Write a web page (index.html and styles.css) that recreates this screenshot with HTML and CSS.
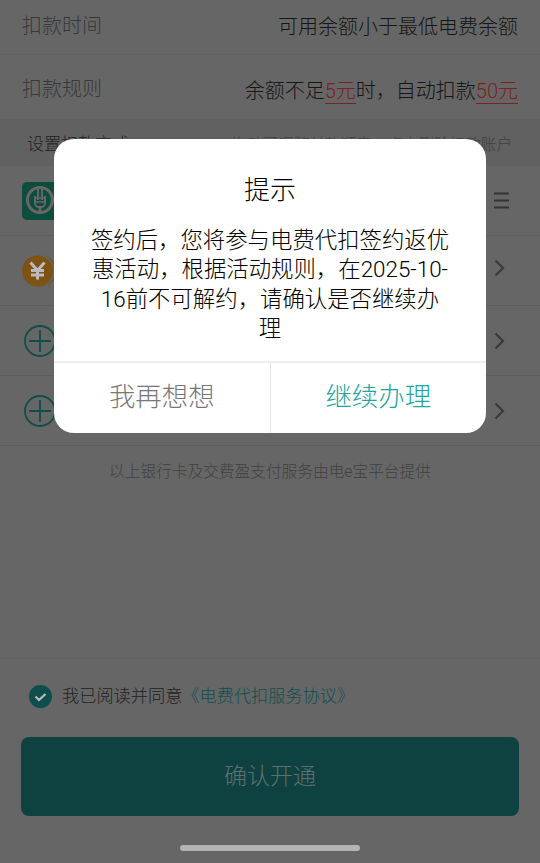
FILE: index.html
```html
<!DOCTYPE html>
<html lang="zh-CN">

<head>
    <meta charset="UTF-8">
    <meta name="viewport" content="width=device-width, initial-scale=1.0">
    <title>电费代扣</title>
    <link rel="stylesheet" href="styles.css">
</head>

<body>

    <div class="page">
        <div class="info-row info-time">
            <span class="info-label">扣款时间</span>
            <span class="info-value">可用余额小于最低电费余额</span>
        </div>
        <div class="info-row info-rule">
            <span class="info-label">扣款规则</span>
            <span class="info-value">余额不足<em>5元</em>时，自动扣款<em>50元</em></span>
        </div>

        <div class="pay-head">
            <span class="pay-title">设置扣款方式</span>
            <span class="pay-tip">拖动可调整付款顺序，点击删除扣款账户</span>
        </div>

        <div class="pay-row">
            <svg class="pay-icon" width="38" height="38" viewBox="0 0 38 38">
                <rect width="38" height="38" rx="5" fill="#0c4d3d" />
                <circle cx="18" cy="18" r="12.500" fill="none" stroke="#666" stroke-width="3" />
                <path d="M13 14v8c0 2 3 3 5 3s5-1 5-3v-8" stroke="#666" stroke-width="2" fill="none" />
                <path d="M16 4v14M20 4v14" stroke="#666" stroke-width="2" fill="none" />
                <path d="M13 16h10M13 20h10" stroke="#666" stroke-width="1.500" fill="none" />
                <path d="M18 24v8" stroke="#666" stroke-width="3" fill="none" />
            </svg>
            <svg class="drag-icon" width="15" height="17" viewBox="0 0 15 17">
                <path d="M0 1.500h15M0 8.500h15M0 15.500h15" stroke="#333" stroke-width="2" />
            </svg>
        </div>
        <div class="pay-row">
            <svg class="pay-icon" width="38" height="32" viewBox="0 0 38 32">
                <circle cx="19" cy="16" r="15.500" fill="#7d5214" />
                <circle cx="17" cy="16" r="16" fill="#666" />
                <circle cx="15.500" cy="16" r="15.500" fill="#7d5214" />
                <path d="M8.500 7.500l7 8 7-8M15.500 15v9.500M9 15.500h13M9 20h13" stroke="#bbb" stroke-width="3" fill="none" />
            </svg>
            <svg class="arrow arrow-high" width="11" height="18" viewBox="0 0 11 18">
                <path d="M1.500 1.500l7.500 7.500-7.500 7.500" stroke="#3a3a3a" stroke-width="2.200" fill="none" />
            </svg>
        </div>
        <div class="pay-row">
            <svg class="pay-icon add-icon" width="32" height="32" viewBox="0 0 32 32">
                <circle cx="16" cy="16" r="15" fill="none" stroke="#0d4f4b" stroke-width="1.800" />
                <path d="M16 5v22M5 16h22" stroke="#0d4f4b" stroke-width="1.800" />
            </svg>
            <svg class="arrow" width="11" height="18" viewBox="0 0 11 18">
                <path d="M1.500 1.500l7.500 7.500-7.500 7.500" stroke="#3a3a3a" stroke-width="2.200" fill="none" />
            </svg>
        </div>
        <div class="pay-row">
            <svg class="pay-icon add-icon" width="32" height="32" viewBox="0 0 32 32">
                <circle cx="16" cy="16" r="15" fill="none" stroke="#0d4f4b" stroke-width="1.800" />
                <path d="M16 5v22M5 16h22" stroke="#0d4f4b" stroke-width="1.800" />
            </svg>
            <svg class="arrow" width="11" height="18" viewBox="0 0 11 18">
                <path d="M1.500 1.500l7.500 7.500-7.500 7.500" stroke="#3a3a3a" stroke-width="2.200" fill="none" />
            </svg>
        </div>

        <p class="pay-note">以上银行卡及交费盈支付服务由电e宝平台提供</p>

        <div class="bottom">
            <div class="agree">
                <svg width="23" height="23" viewBox="0 0 23 23">
                    <circle cx="11.500" cy="11.500" r="11.500" fill="#0e4f4d" />
                    <path d="M6.500 11.500l3.500 3.500 6.500-6" stroke="#bbb" stroke-width="2.200" fill="none" />
                </svg>
                <span>我已阅读并同意<a>《电费代扣服务协议》</a></span>
            </div>
            <div class="confirm-btn">确认开通</div>
        </div>
    </div>

    <div class="dialog-wrap">
        <div class="dialog">
            <h2>提示</h2>
            <p>签约后，您将参与电费代扣签约返优惠活动，根据活动规则，在2025-10-16前不可解约，请确认是否继续办理</p>
            <div class="dialog-btns">
                <div class="btn-cancel">我再想想</div>
                <div class="btn-ok">继续办理</div>
            </div>
        </div>
    </div>

    <div class="home-bar"></div>

</body>

</html>
```

FILE: styles.css
```css
* {
    box-sizing: border-box;
}

body {
    margin: 0;
    font-family: Roboto, "Noto Sans CJK SC", sans-serif;
    font-weight: 300;
    overflow: hidden;
}

.page {
    position: relative;
    height: 863px;
    background-color: #666;
    color: #333;
    display: flex;
    flex-direction: column;
}

.info-row {
    display: flex;
    justify-content: space-between;
    align-items: center;
    padding: 0 22px;
    font-size: 20px;
    border-bottom: 1px solid #626262;
}

.info-time {
    height: 55px;
    padding-bottom: 3px;
}

.info-rule {
    height: 64px;
    padding-top: 4px;
    border-bottom: none;
}

.info-label {
    color: #383838;
    padding-bottom: 3px;
}

.info-value {
    color: #151515;
}

.info-value em {
    font-style: normal;
    color: #7d2020;
    border-bottom: 1px solid #7d2020;
}

.pay-head {
    height: 47px;
    display: flex;
    justify-content: space-between;
    align-items: center;
    padding: 0 28px 0 27px;
    background-color: #616161;
}

.pay-title {
    font-size: 17px;
    color: #222;
}

.pay-tip {
    font-size: 15.600px;
    color: #404040;
}

.pay-row {
    height: 70px;
    display: flex;
    justify-content: space-between;
    align-items: center;
    padding: 0 31px 0 22px;
    border-bottom: 1px solid #5d5d5d;
}

.add-icon {
    margin-left: 2px;
}

.arrow {
    margin-right: 4px;
}

.arrow-high {
    margin-bottom: 6px;
}

.pay-note {
    margin: 13px 0 0;
    text-align: center;
    font-size: 15.700px;
    color: #404040;
}

.bottom {
    margin-top: auto;
    height: 205px;
    padding: 0 21px;
    border-top: 1px solid #626262;
}

.agree {
    display: flex;
    align-items: center;
    gap: 10px;
    margin: 23px 0 0 8px;
    font-size: 17.200px;
    color: #1f1f1f;
}

.agree span {
    padding-bottom: 3px;
}

.agree a {
    color: #0e4f4d;
}

.confirm-btn {
    height: 79px;
    margin-top: 27px;
    padding-bottom: 6px;
    border-radius: 8px;
    background-color: #0d4240;
    color: #5f6f6e;
    font-size: 23px;
    display: flex;
    align-items: center;
    justify-content: center;
}

.dialog-wrap {
    position: absolute;
    top: 139px;
    left: 54px;
}

.dialog {
    width: 432px;
    height: 294px;
    background-color: white;
    border-radius: 20px;
    display: flex;
    flex-direction: column;
    color: #000;
    overflow: hidden;
}

.dialog h2 {
    margin: 32px 0 0;
    height: 38px;
    line-height: 38px;
    text-align: center;
    font-size: 26px;
    font-weight: 300;
    color: #000;
}

.dialog p {
    margin: 17px 36.500px 0;
    text-align: center;
    font-size: 22.400px;
    line-height: 29.400px;
}

.dialog-btns {
    margin-top: auto;
    height: 72px;
    display: flex;
    border-top: 2px solid #eee;
    font-size: 26.400px;
}

.dialog-btns div {
    flex: 1;
    display: flex;
    align-items: center;
    justify-content: center;
    padding-bottom: 8px;
}

.btn-cancel {
    color: #777;
    border-right: 1px solid #e6e6e6;
}

.btn-ok {
    color: #1fa5a0;
}

.home-bar {
    position: absolute;
    left: 180px;
    top: 845px;
    width: 180px;
    height: 6px;
    border-radius: 3px;
    background-color: #b3b3b3;
}
```
